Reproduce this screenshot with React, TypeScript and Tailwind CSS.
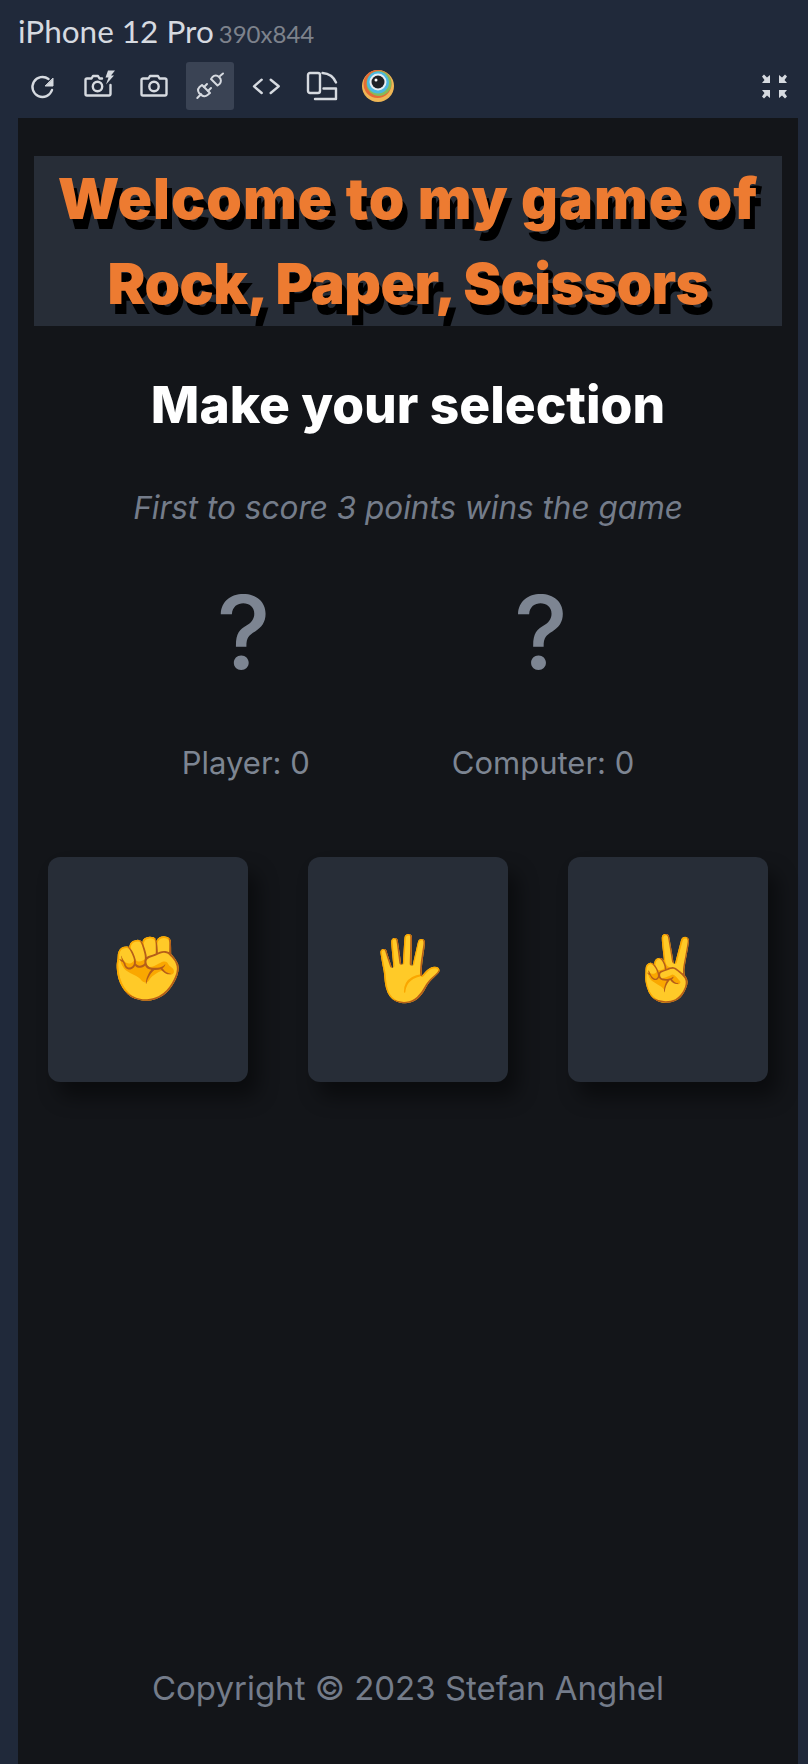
import React from 'react';

const Icon = ({ children }: { children: React.ReactNode }) => (
  <svg viewBox="0 0 28 28" className="w-7 h-7 overflow-visible" fill="none" stroke="#d6dae0" strokeWidth="2.4" strokeLinecap="round" strokeLinejoin="round">
    {children}
  </svg>
);

const ToolButton = ({ children, active }: { children: React.ReactNode; active?: boolean }) => (
  <div className={`w-12 h-12 flex items-center justify-center rounded-[3px] ${active ? 'bg-[#3a4354]' : ''}`}>{children}</div>
);

const Logo = () => (
  <svg viewBox="0 0 32 32" className="w-8 h-8">
    <circle cx="16" cy="16" r="16" fill="#efb655" />
    <circle cx="15.500" cy="14" r="14" fill="#e46b36" />
    <circle cx="17" cy="13.500" r="12.500" fill="#86bb5a" />
    <circle cx="16" cy="12.500" r="11" fill="#4db8e0" />
    <circle cx="16" cy="12" r="8.500" fill="#e8eef2" />
    <circle cx="16" cy="12" r="6.500" fill="#1f2126" />
    <circle cx="14" cy="10" r="1.500" fill="#ffffff" />
  </svg>
);

const Choice = ({ emoji }: { emoji: string }) => (
  <div className="w-[200px] h-[225px] flex items-center justify-center rounded-xl bg-[#272d37] shadow-[10px_15px_20px_rgba(0,0,0,0.45)] text-[63px] font-['Noto_Color_Emoji','Apple_Color_Emoji',sans-serif]">
    {emoji}
  </div>
);

const Score = ({ label }: { label: string }) => (
  <div className="flex flex-col items-center">
    <div className="text-[102px] leading-[108px] font-medium -translate-x-[2px]">?</div>
    <div className="mt-[56px] text-[31px] leading-[42px]">{label}</div>
  </div>
);

export default function App() {
  return (
    <div className="w-[808px] h-[1764px] flex flex-col bg-[#20293a] font-['Inter',sans-serif] overflow-hidden">
      {/* Responsive bar */}
      <div className="h-[118px] shrink-0 px-[18px]">
        <div className="h-[62px] flex items-baseline pt-[11px] font-['Lato',sans-serif]">
          <span className="text-[31.500px] leading-[40px] text-[#d6dae0]">iPhone 12 Pro</span>
          <span className="ml-[5px] text-[24px] text-[#7d828c]">390x844</span>
        </div>
        <div className="flex items-center gap-2">
          <ToolButton>
            <Icon>
              <path d="M24 18a10 10 0 1 1-3.500-11" />
              <path d="M25 6.500v7.500h-7.500z" fill="#d6dae0" strokeWidth="1" />
            </Icon>
          </ToolButton>
          <ToolButton>
            <Icon>
              <path d="M18 6.500h-2.500l-1.500-2.500h-5l-1.500 2.500H3a1.500 1.500 0 0 0-1.500 1.500v14a1.500 1.500 0 0 0 1.500 1.500h22a1.500 1.500 0 0 0 1.500-1.500V13" />
              <circle cx="13.500" cy="14.500" r="4.700" />
              <path d="M24 -1.500l7 0-4 5h3l-8 9 2.500-7h-3z" fill="#d6dae0" stroke="none" />
            </Icon>
          </ToolButton>
          <ToolButton>
            <Icon>
              <path d="M3 6.500h5.500l1.500-2.500h8l1.500 2.500H25a1.500 1.500 0 0 1 1.500 1.500v14a1.500 1.500 0 0 1-1.500 1.500H3A1.500 1.500 0 0 1 1.500 22V8A1.500 1.500 0 0 1 3 6.500z" />
              <circle cx="14" cy="14.500" r="4.700" />
            </Icon>
          </ToolButton>
          <ToolButton active>
            <Icon>
              <g strokeWidth="2">
                <path d="M1.300 26l3.700-3.700M24 4l3-2.500" />
                <path d="M6 13l8 8-2.500 2a4.500 4.500 0 0 1-6.500-.5a4.500 4.500 0 0 1-1.500-7.500z" />
                <path d="M8 15l3-3M12 19l3-3" />
                <path d="M15 7l6.500 6.500 2-1.500a4.500 4.500 0 0 0 0-6.500l-.5-.5a4.500 4.500 0 0 0-6.500 0z" />
              </g>
            </Icon>
          </ToolButton>
          <ToolButton>
            <Icon>
              <path d="M9.700 7.700L2 14.300l7.700 6.700M18.700 7.700l8 6.600-8 6.700" />
            </Icon>
          </ToolButton>
          <ToolButton>
            <Icon>
              <rect x="0" y="1" width="12" height="20" rx="2" />
              <path d="M15.500 16.500H28V27H7M14.500 1c6 .5 11 3.500 13.500 9.500" />
            </Icon>
          </ToolButton>
          <ToolButton>
            <Logo />
          </ToolButton>
          <div className="ml-auto -mr-2 w-12 h-12 flex items-center justify-center">
            <svg viewBox="0 0 25 25" className="w-[25px] h-[25px]" fill="#d6dae0">
              <path d="M0 2.500L2 .5l3 3L8 1v8H0l2.500-3zM25 2.500L23 .5l-3 3L17 1v8h8l-2.500-3zM0 22.500l2 2 3-3 3 2.500v-8H0l2.500 3zM25 22.500l-2 2-3-3-3 2.500v-8h8l-2.500 3z" />
            </svg>
          </div>
        </div>
      </div>

      {/* Device viewport */}
      <div className="flex-1 ml-[18px] mr-[10px] bg-[#131519] flex flex-col items-center">
        <div className="mt-[38px] w-[748px] h-[170px] bg-[#272d37] text-center text-[#ed7b31] text-[57px] leading-[85px] font-black [text-shadow:5px_10px_0_#000]">
          <div className="tracking-[1px]">Welcome to my game of</div>
          <div className="tracking-[-0.6px]">Rock, Paper, Scissors</div>
        </div>
        <div className="mt-[45px] text-[51.500px] leading-[66px] font-extrabold text-white">Make your selection</div>
        <div className="mt-[51px] text-[31.500px] leading-[40px] italic text-[#747c8a]">First to score 3 points wins the game</div>
        <div className="mt-[50px] flex justify-center gap-[142px] text-[#7d8592]">
          <Score label="Player: 0" />
          <Score label="Computer: 0" />
        </div>
        <div className="mt-[73px] flex gap-[60px]">
          <Choice emoji="✊" />
          <Choice emoji="🖐" />
          <Choice emoji="✌️" />
        </div>
        <div className="mt-auto mb-[54px] text-[33px] leading-[44px] text-[#747c8a]">Copyright © 2023 Stefan Anghel</div>
      </div>
    </div>
  );
}
